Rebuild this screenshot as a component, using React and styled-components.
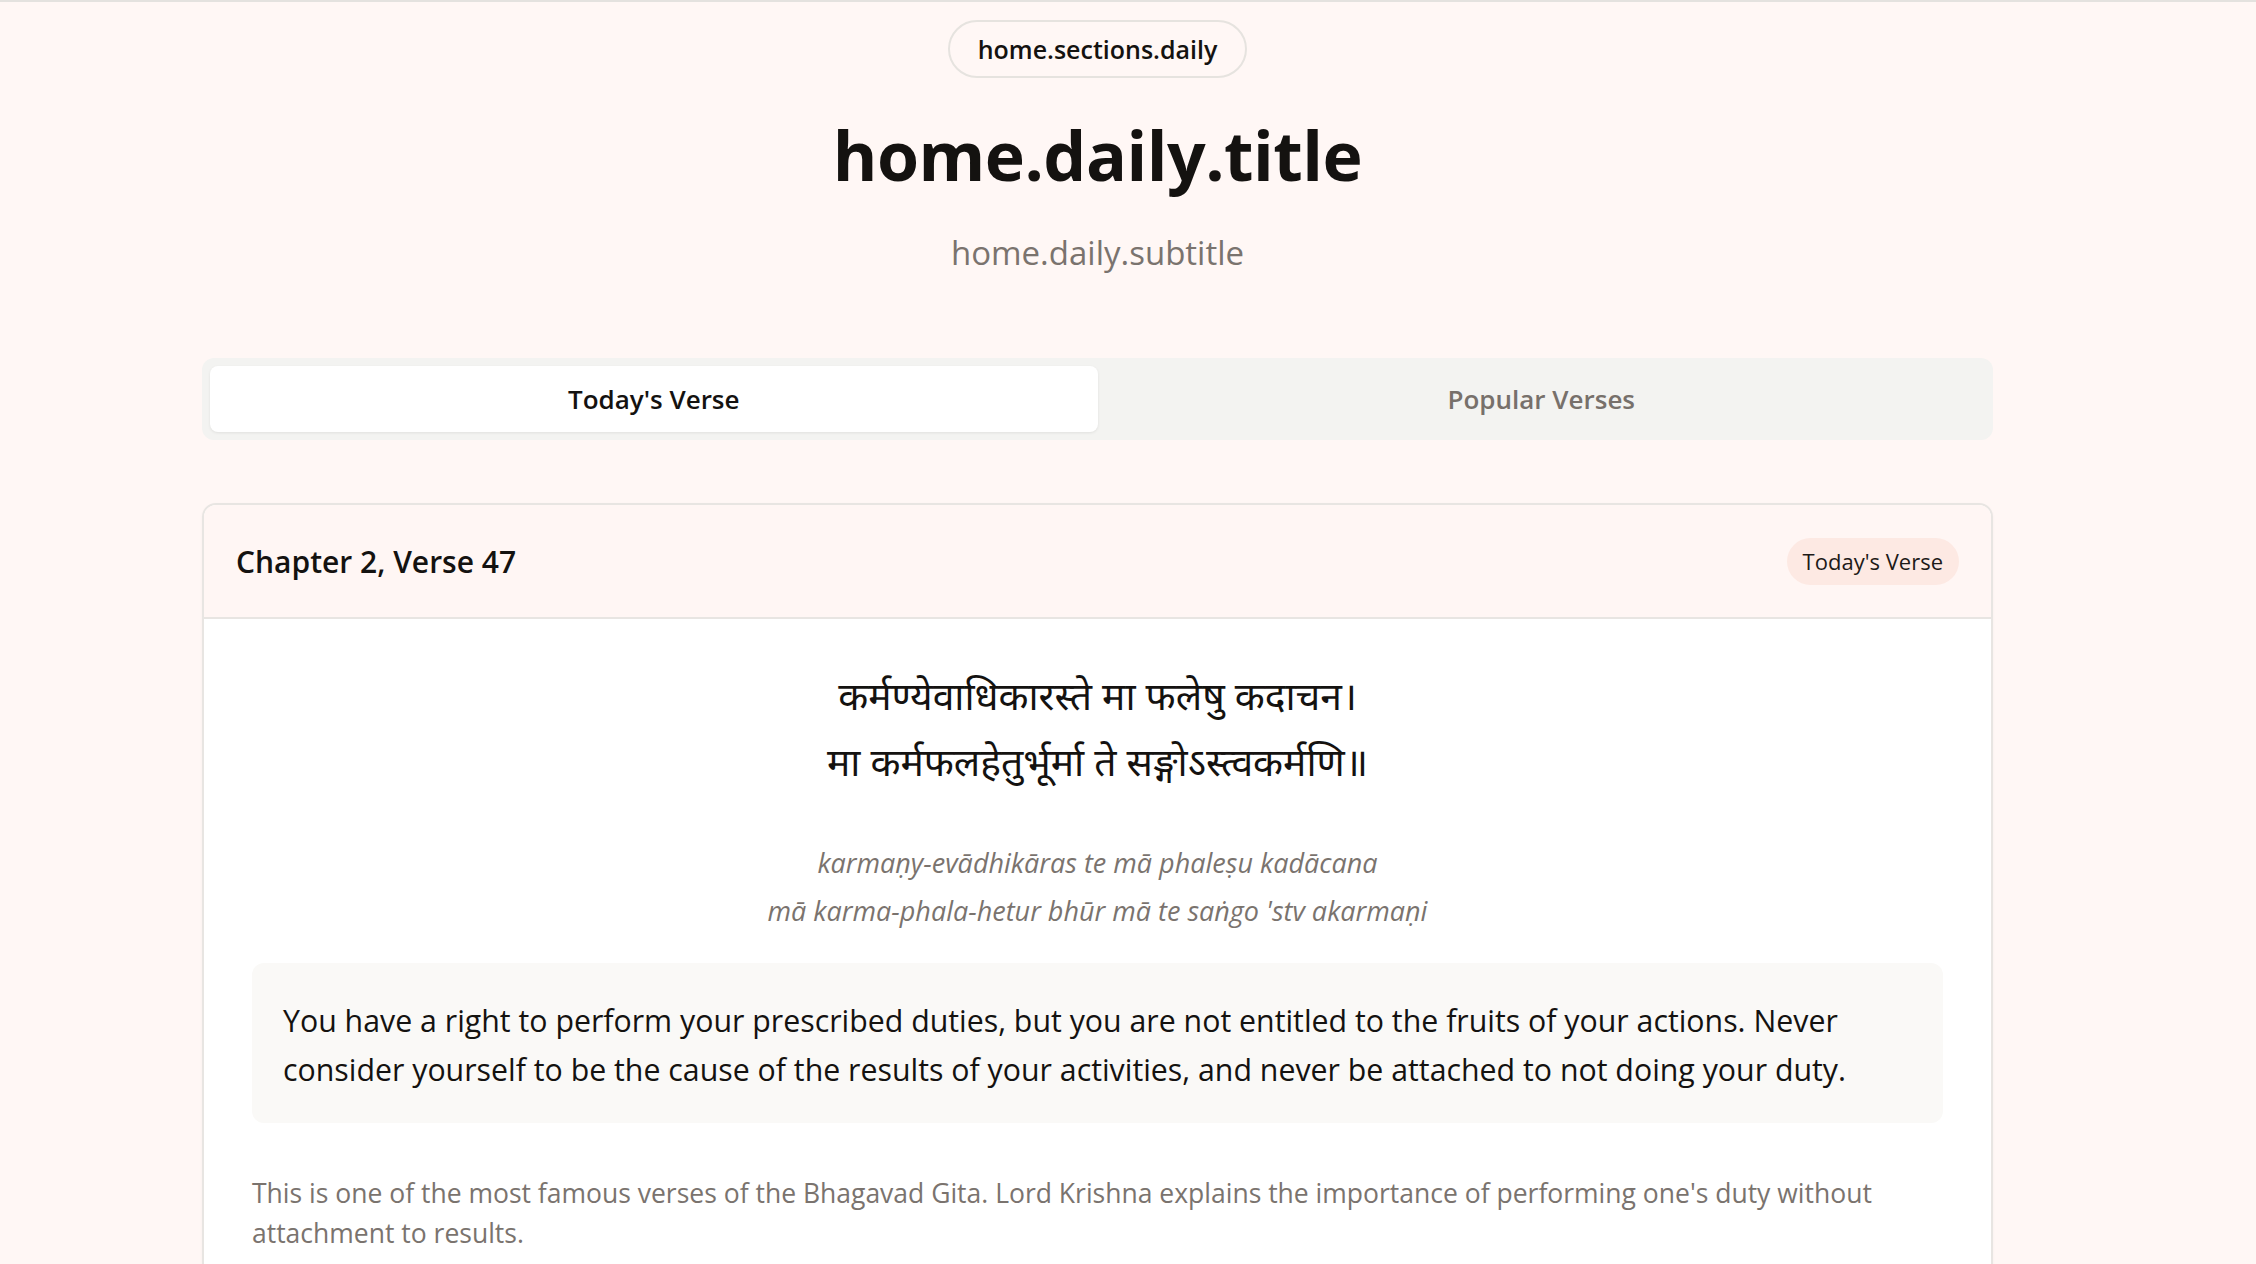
import React from "react";
import styled, { createGlobalStyle } from "styled-components";

const GlobalStyle = createGlobalStyle`
  html, body { margin: 0; padding: 0; }
  body {
    background: #fff7f5;
    font-family: "Open Sans", "Noto Sans", sans-serif;
    color: #141210;
  }
`;

const Page = styled.main`
  min-height: 1264px;
  box-sizing: border-box;
  border-top: 2px solid #e4e2df;
  padding: 0 61px 0 0;
`;

const Container = styled.div`
  max-width: 1791px;
  margin: 0 auto;
`;

const Hero = styled.header`
  display: flex;
  flex-direction: column;
  align-items: center;
  padding-top: 18px;
`;

const SectionPill = styled.span`
  display: inline-flex;
  align-items: center;
  justify-content: center;
  height: 58px;
  box-sizing: border-box;
  padding: 0 28px;
  border: 2px solid #e6e3df;
  border-radius: 999px;
  font-size: 25px;
  font-weight: 600;
  color: #141210;
`;

const Title = styled.h1`
  margin: 34px 0 0;
  font-size: 68px;
  line-height: 86px;
  font-weight: 700;
  letter-spacing: -0.5px;
`;

const Subtitle = styled.p`
  margin: 32px 0 0;
  font-size: 33px;
  line-height: 46px;
  color: #7a736e;
`;

const TabList = styled.div`
  margin-top: 82px;
  display: grid;
  grid-template-columns: 1fr 1fr;
  padding: 8px;
  height: 82px;
  box-sizing: border-box;
  background: #f3f3f1;
  border-radius: 12px;
`;

const Tab = styled.button`
  border: 0;
  border-radius: 8px;
  font-family: inherit;
  font-size: 26px;
  font-weight: 600;
  background: ${(p) => (p.$active ? "#ffffff" : "transparent")};
  color: ${(p) => (p.$active ? "#141210" : "#77706b")};
  box-shadow: ${(p) => (p.$active ? "0 1px 3px rgba(0,0,0,0.08)" : "none")};
  cursor: pointer;
`;

const Card = styled.section`
  margin-top: 63px;
  background: #ffffff;
  border: 2px solid #e8e5e2;
  border-radius: 14px;
  box-shadow: 0 1px 3px rgba(0, 0, 0, 0.04);
  overflow: hidden;
`;

const CardHeader = styled.div`
  display: flex;
  align-items: center;
  justify-content: space-between;
  height: 112px;
  padding: 0 32px;
  background: #fff6f4;
  border-bottom: 2px solid #e8e5e2;
`;

const CardTitle = styled.h2`
  margin: 0;
  font-size: 30px;
  font-weight: 600;
`;

const Badge = styled.span`
  display: inline-flex;
  align-items: center;
  height: 47px;
  padding: 0 16px;
  border-radius: 999px;
  background: #fde9e3;
  font-size: 22px;
  color: #1d1a18;
`;

const CardBody = styled.div`
  padding: 43px 48px 40px;
`;

const Sanskrit = styled.p`
  margin: 0;
  text-align: center;
  font-size: 39px;
  line-height: 66px;
  color: #141210;
`;

const Transliteration = styled.p`
  margin: 45px 0 0;
  text-align: center;
  font-style: italic;
  font-size: 27px;
  line-height: 48px;
  color: #7a736e;
`;

const TranslationBox = styled.div`
  margin-top: 28px;
  padding: 33px 31px 29px;
  min-height: 160px;
  box-sizing: border-box;
  background: #faf9f7;
  border-radius: 12px;
  font-size: 30.3px;
  line-height: 49px;
  color: #141210;
`;

const Commentary = styled.p`
  margin: 50px 0 0;
  font-size: 26.5px;
  line-height: 40px;
  color: #7a736e;
`;

export default function App() {
  return (
    <>
      <GlobalStyle />
      <Page>
        <Container>
          <Hero>
            <SectionPill>home.sections.daily</SectionPill>
            <Title>home.daily.title</Title>
            <Subtitle>home.daily.subtitle</Subtitle>
          </Hero>
          <TabList>
            <Tab $active>Today's Verse</Tab>
            <Tab>Popular Verses</Tab>
          </TabList>
          <Card>
            <CardHeader>
              <CardTitle>Chapter 2, Verse 47</CardTitle>
              <Badge>Today's Verse</Badge>
            </CardHeader>
            <CardBody>
              <Sanskrit>
                कर्मण्येवाधिकारस्ते मा फलेषु कदाचन।
                <br />
                मा कर्मफलहेतुर्भूर्मा ते सङ्गोऽस्त्वकर्मणि॥
              </Sanskrit>
              <Transliteration>
                karmaṇy-evādhikāras te mā phaleṣu kadācana
                <br />
                mā karma-phala-hetur bhūr mā te saṅgo 'stv akarmaṇi
              </Transliteration>
              <TranslationBox>
                You have a right to perform your prescribed duties, but you are not entitled to the fruits of your actions. Never consider yourself to be the cause of the results of your activities, and never be attached to not doing your duty.
              </TranslationBox>
              <Commentary>
                This is one of the most famous verses of the Bhagavad Gita. Lord Krishna explains the importance of performing one's duty without attachment to results.
              </Commentary>
            </CardBody>
          </Card>
        </Container>
      </Page>
    </>
  );
}
